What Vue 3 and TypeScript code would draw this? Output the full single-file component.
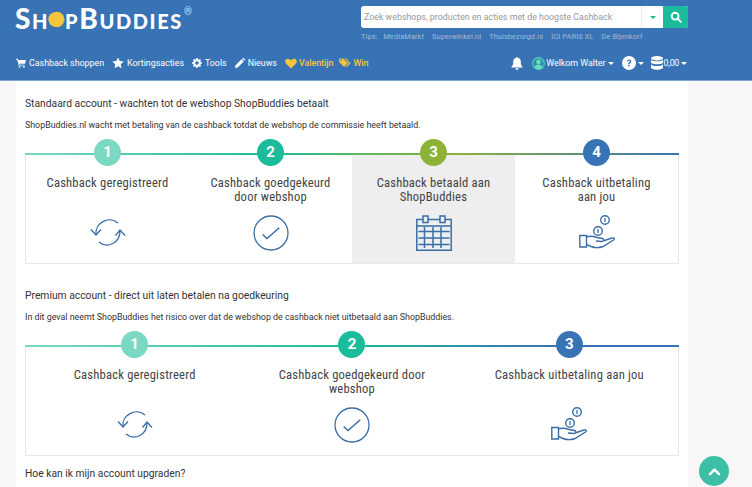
<script setup lang="ts">
interface Step {
  title: string
  icon: 'sync' | 'check' | 'calendar' | 'coins'
  color: string
  active?: boolean
}

interface Account {
  heading: string
  text: string
  gradient: string
  steps: Step[]
}

const teal = '#7bd8c3'
const green = '#1abc9c'
const olive = '#8cb238'
const blue = '#3873b5'

const navItems = [
  { label: 'Cashback shoppen', icon: 'cart' },
  { label: 'Kortingsacties', icon: 'star' },
  { label: 'Tools', icon: 'gear' },
  { label: 'Nieuws', icon: 'pencil' },
  { label: 'Valentijn', icon: 'heart', gold: true },
  { label: 'Win', icon: 'tags', gold: true }
]

const tips = ['MediaMarkt', 'Superwinkel.nl', 'Thuisbezorgd.nl', 'ICI PARIS XL', 'De Bijenkorf']

const accounts: Account[] = [
  {
    heading: 'Standaard account - wachten tot de webshop ShopBuddies betaalt',
    text: 'ShopBuddies.nl wacht met betaling van de cashback totdat de webshop de commissie heeft betaald.',
    gradient: `linear-gradient(90deg, ${teal}, ${green} 38%, #5fb85c 52%, ${olive} 66%, ${blue})`,
    steps: [
      { title: 'Cashback geregistreerd', icon: 'sync', color: teal },
      { title: 'Cashback goedgekeurd door webshop', icon: 'check', color: green },
      { title: 'Cashback betaald aan ShopBuddies', icon: 'calendar', color: olive, active: true },
      { title: 'Cashback uitbetaling aan jou', icon: 'coins', color: blue }
    ]
  },
  {
    heading: 'Premium account - direct uit laten betalen na goedkeuring',
    text: 'In dit geval neemt ShopBuddies het risico over dat de webshop de cashback niet uitbetaald aan ShopBuddies.',
    gradient: `linear-gradient(90deg, ${teal}, ${green} 50%, ${blue} 80%)`,
    steps: [
      { title: 'Cashback geregistreerd', icon: 'sync', color: teal },
      { title: 'Cashback goedgekeurd door webshop', icon: 'check', color: green },
      { title: 'Cashback uitbetaling aan jou', icon: 'coins', color: blue }
    ]
  }
]
</script>

<template>
  <div class="page">
    <header class="header">
      <div class="top">
        <div class="logo">
          <span>Sh</span>
          <svg class="logo-o" viewBox="0 0 20 20" width="17" height="17">
            <circle cx="10.5" cy="10" r="9" fill="#e9bd3f" />
            <circle cx="9" cy="10" r="8.6" fill="#f4c63d" />
          </svg>
          <span>pBuddies</span>
          <sup class="reg">®</sup>
        </div>
        <div class="search-wrap">
          <div class="search">
            <div class="search-input">Zoek webshops, producten en acties met de hoogste Cashback</div>
            <div class="search-drop"><i class="drop-caret"></i></div>
            <div class="search-btn">
              <svg viewBox="0 0 14 14" width="12" height="12" fill="none" stroke="#fff" stroke-width="2.2" stroke-linecap="round">
                <circle cx="6" cy="6" r="4" />
                <path d="M9 9l3.6 3.6" />
              </svg>
            </div>
          </div>
          <div class="tips">
            <span class="tips-label">Tips:</span>
            <span v-for="tip in tips" :key="tip">{{ tip }}</span>
          </div>
        </div>
      </div>

      <nav class="nav">
        <a v-for="item in navItems" :key="item.label" class="nav-item" :class="{ gold: item.gold }">
          <svg v-if="item.icon === 'cart'" viewBox="0 0 12 12" width="10" height="10" fill="currentColor">
            <path d="M0 1h2.200l.4 1.400H12l-1.300 4.600H3.800l.3 1H10.400v1H3.200L1.500 2H0z" />
            <circle cx="4.300" cy="10.600" r="1.100" />
            <circle cx="9.500" cy="10.600" r="1.100" />
          </svg>
          <svg v-else-if="item.icon === 'star'" viewBox="0 0 12 12" width="12" height="12" fill="currentColor">
            <path d="M6 .4l1.700 3.700 4 .5-3 2.700.8 4L6 9.300l-3.500 2 .8-4-3-2.700 4-.5z" />
          </svg>
          <svg v-else-if="item.icon === 'gear'" viewBox="0 0 12 12" width="10" height="10">
            <circle cx="6" cy="6" r="3.400" fill="none" stroke="currentColor" stroke-width="2.400" />
            <path d="M6 0v12M0 6h12M1.800 1.800l8.400 8.400M10.200 1.800l-8.400 8.400" stroke="currentColor" stroke-width="2" stroke-dasharray="2 8 2" />
          </svg>
          <svg v-else-if="item.icon === 'pencil'" viewBox="0 0 12 12" width="10" height="10" fill="currentColor">
            <path d="M0 12l.7-3.300L7.800 1.600l2.600 2.600-7.100 7.100zM8.600.8l.7-.6c.4-.3.8-.3 1.100 0l1.400 1.400c.3.300.3.700 0 1l-.7.700z" />
          </svg>
          <svg v-else-if="item.icon === 'heart'" viewBox="0 0 12 11" width="12" height="11" fill="currentColor">
            <path d="M6 10.500L1 5.600C-.6 3.900.3.800 2.900.8 4.300.8 5.300 1.600 6 2.600 6.700 1.600 7.700.8 9.100.8c2.600 0 3.500 3.100 1.900 4.800z" />
          </svg>
          <svg v-else-if="item.icon === 'tags'" viewBox="0 0 13 11" width="12" height="10" fill="currentColor">
            <path d="M0 .5h4.500l5 5-4 4.500L0 4.500zM2.200 3.300a.9.9 0 100-1.800.9.900 0 000 1.800z" fill-rule="evenodd" />
            <path d="M6 .5h1.500l5 5-4 4.500-1-1 3.200-3.500z" />
          </svg>
          <span>{{ item.label }}</span>
        </a>
        <div class="nav-right">
          <svg class="bell" viewBox="0 0 12 13" width="12" height="13" fill="#fff">
            <path d="M6 0c.5 0 .8.300.8.800 2 .4 3 2 3 3.900 0 3 .6 4 1.700 5.100v.8H.5v-.8C1.600 8.700 2.200 7.700 2.200 4.700c0-1.900 1-3.500 3-3.900C5.200.3 5.500 0 6 0zM4.500 11.300h3C7.500 12.200 6.800 13 6 13s-1.500-.8-1.500-1.700z" />
          </svg>
          <a class="nav-item user">
            <svg viewBox="0 0 14 14" width="13" height="13">
              <circle cx="7" cy="7" r="6.300" fill="#2f8fa8" stroke="#55d0bd" stroke-width="1.200" />
              <circle cx="7" cy="5.300" r="2.500" fill="#66dcc4" />
              <path d="M2.800 11.500c.4-2.500 2-3.500 4.200-3.500s3.800 1 4.200 3.500C10 12.700 8.500 13.300 7 13.300s-3-.6-4.200-1.800z" fill="#66dcc4" />
            </svg>
            <span>Welkom Walter</span><i class="caret"></i>
          </a>
          <a class="nav-item help">
            <svg viewBox="0 0 14 14" width="14" height="14">
              <circle cx="7" cy="7" r="7" fill="#fff" />
              <path d="M4.800 5.300C5 4 6 3.400 7.100 3.400c1.300 0 2.300.8 2.300 1.900 0 1.700-1.900 1.600-1.900 3H6.100c0-2.100 1.800-2 1.800-3 0-.4-.4-.7-.9-.7-.5 0-.9.300-1 .9zM6.100 9.100h1.400v1.500H6.100z" fill="#3873b5" />
            </svg>
            <i class="caret help-caret"></i>
          </a>
          <a class="nav-item balance">
            <svg viewBox="0 0 12 14" width="12" height="14" fill="#fff">
              <ellipse cx="6" cy="2.200" rx="6" ry="2.200" />
              <path d="M0 3.700c1 1.200 3.500 1.500 6 1.500s5-.3 6-1.500v2.500c0 1.200-2.700 2-6 2s-6-.8-6-2z" />
              <path d="M0 8.400c1 1.200 3.500 1.500 6 1.500s5-.3 6-1.500v3.200c0 1.300-2.700 2.200-6 2.200s-6-.9-6-2.200z" />
            </svg>
            <span class="amount">0,00</span><i class="caret"></i>
          </a>
        </div>
      </nav>
    </header>

    <main class="card">
      <section v-for="account in accounts" :key="account.heading" class="account">
        <h2 class="heading">{{ account.heading }}</h2>
        <p class="text">{{ account.text }}</p>
        <div class="steps">
          <div class="steps-line" :style="{ background: account.gradient }"></div>
          <div class="steps-row">
            <div v-for="(step, i) in account.steps" :key="step.title" class="step" :class="{ active: step.active }">
              <div class="num" :style="{ background: step.color }">{{ i + 1 }}</div>
              <div class="step-title">{{ step.title }}</div>
              <svg class="step-icon" viewBox="0 0 36 36" width="36" height="36" fill="none" stroke="#3a6ea5" stroke-width="1.300">
                <template v-if="step.icon === 'sync'">
                  <path d="M6 20A13.500 13.500 0 0 1 28 8" />
                  <path d="M1 14.500l5 5.500 5-5.500" />
                  <path d="M30 15.500A13 14 0 0 1 9 27" />
                  <path d="M25.500 20.500l4.500-5.500 5 5.500" />
                </template>
                <template v-else-if="step.icon === 'check'">
                  <circle cx="18" cy="18" r="17" />
                  <path d="M9.700 19.500l4.300 4L26.300 12.800" stroke-width="1.500" />
                </template>
                <template v-else-if="step.icon === 'calendar'">
                  <path d="M.8 4.500h34.400v30.700H.8zM.8 11h34.400" stroke-width="1.500" />
                  <path d="M7 1h5v6.500H7zM24 1h5v6.500h-5z" fill="#eee" stroke-width="1.500" />
                  <path d="M2.500 16.500h31M2.500 23h31M2.500 29.500h31M8.500 12v21M17 12v21M25 12v21" stroke-width="1.500" />
                </template>
                <template v-else>
                  <circle cx="26" cy="5" r="4.300" stroke-width="1.400" />
                  <path d="M26 3v4" />
                  <circle cx="19" cy="16" r="4.300" stroke-width="1.400" />
                  <path d="M19 14v4" />
                  <path d="M.8 20.500h6.700V32H.8z" stroke-width="1.400" />
                  <path d="M7.500 22C11 20.500 14 21 18 22.500L23.500 23.500C25.500 24.500 25 26.500 22.500 26.500L17 26M24 26L33 23C35.500 22.500 36 24 34.500 25L24 31.500C20 33 16 33 12 31.500L7.500 29.500" stroke-width="1.400" />
                </template>
              </svg>
            </div>
          </div>
        </div>
      </section>
      <h2 class="heading last">Hoe kan ik mijn account upgraden?</h2>
    </main>

    <a class="to-top">
      <svg viewBox="0 0 14 10" width="13" height="9" fill="none" stroke="#fff" stroke-width="2.800" stroke-linecap="round" stroke-linejoin="round">
        <path d="M2 8l5-5 5 5" />
      </svg>
    </a>
  </div>
</template>

<style>
html,
body {
  margin: 0;
  height: 487px;
  overflow: hidden;
  background: #f7f7f7;
}
</style>

<style scoped>
.page {
  font-family: Roboto, "Liberation Sans", sans-serif;
  color: #333;
}

.header {
  background: #3873b5;
  height: 80px;
  border-bottom: 1px solid #7fa6d2;
  box-sizing: content-box;
  display: flex;
  flex-direction: column;
}

.top {
  display: flex;
  justify-content: space-between;
  padding: 6px 64px 0 15px;
  height: 49px;
}

.logo {
  display: flex;
  align-items: center;
  height: 24px;
  color: #fff;
  font-family: Lato, sans-serif;
  font-weight: 900;
  font-size: 28px;
  font-variant: small-caps;
  letter-spacing: 1.6px;
  line-height: 24px;
}

.logo-o {
  margin: 3px 0 0 -1px;
}

.reg {
  font-family: Roboto, sans-serif;
  font-weight: 400;
  font-size: 10px;
  line-height: 10px;
  margin: -12px 0 0 1px;
  color: #cfe0f2;
}

.search-wrap {
  width: 327px;
}

.search {
  display: flex;
  height: 22px;
  border-radius: 3px;
  overflow: hidden;
  background: #fff;
}

.search-input {
  flex: 1;
  padding-left: 3px;
  font-size: 8.85px;
  line-height: 22px;
  color: #999;
  white-space: nowrap;
}

.search-drop {
  width: 21px;
  border-left: 1px solid #eee;
  display: flex;
  align-items: center;
  justify-content: center;
}

.drop-caret {
  width: 0;
  height: 0;
  border-left: 3px solid transparent;
  border-right: 3px solid transparent;
  border-top: 3px solid #1abc9c;
}

.search-btn {
  width: 25px;
  background: #1abc9c;
  display: flex;
  align-items: center;
  justify-content: center;
}

.tips {
  display: flex;
  gap: 8px;
  margin-top: 3px;
  font-size: 7.4px;
  line-height: 11px;
  letter-spacing: 0.1px;
  color: rgba(255, 255, 255, 0.5);
  white-space: nowrap;
}

.tips-label {
  margin-right: -2px;
}

.nav {
  display: flex;
  align-items: center;
  padding: 0 65px 0 16px;
  height: 16px;
  margin-top: 0;
}

.nav-item {
  display: flex;
  align-items: center;
  gap: 3px;
  margin-right: 8px;
  font-size: 8.85px;
  color: #fff;
  white-space: nowrap;
}

.nav-item.gold {
  gap: 2px;
  margin-right: 6px;
  color: #f4c63d;
  font-weight: 500;
}

.nav-right {
  margin-left: auto;
  display: flex;
  align-items: center;
}

.bell {
  margin-right: 9px;
}

.nav-right .nav-item {
  margin-right: 0;
  gap: 1px;
}

.help {
  margin-left: 8px;
}

.help-caret {
  margin-left: 1px;
}

.balance {
  margin-left: 7px;
}

.amount {
  letter-spacing: -0.3px;
}

.caret {
  width: 0;
  height: 0;
  margin-left: 1px;
  border-left: 3px solid transparent;
  border-right: 3px solid transparent;
  border-top: 3px solid #fff;
}

.card {
  width: 654px;
  margin-left: 16px;
  padding: 17px 9px 0;
  background: #fff;
  border-left: 0;
  height: 389px;
}

.account {
  margin-bottom: 26px;
}

.heading {
  margin: 0;
  font-size: 10.3px;
  line-height: 12px;
  font-weight: 400;
  color: #333;
}

.text {
  margin: 9px 0 0;
  font-size: 8.85px;
  line-height: 12px;
  color: #333;
}

.steps {
  margin-top: 22px;
  border: 1px solid #e8e8e8;
  border-top: 0;
  position: relative;
}

.steps-line {
  position: absolute;
  top: 0;
  left: -1px;
  right: -1px;
  height: 2px;
}

.steps-row {
  display: flex;
}

.step {
  flex: 1 1 0;
  display: flex;
  flex-direction: column;
  align-items: center;
  height: 110px;
  padding: 1px 20px 0;
  box-sizing: border-box;
}

.step.active {
  background: #eee;
}

.num {
  position: relative;
  width: 27px;
  height: 27px;
  margin-top: -15px;
  border-radius: 50%;
  color: #fff;
  font-size: 15px;
  font-weight: 700;
  line-height: 27px;
  text-align: center;
}

.step-title {
  margin-top: 10px;
  height: 28px;
  font-size: 12.6px;
  line-height: 14px;
  letter-spacing: 0.2px;
  color: #444;
  text-align: center;
  font-family: "Roboto Condensed", "Liberation Sans Narrow", Roboto, sans-serif;
  font-stretch: 75%;
}

.step-icon {
  margin-top: 11px;
  flex: none;
}

.last {
  margin-top: -14px;
}

.to-top {
  position: fixed;
  left: 699px;
  top: 456px;
  width: 30px;
  height: 30px;
  border-radius: 50%;
  background: #3dbfa6;
  display: flex;
  align-items: center;
  justify-content: center;
}
</style>
